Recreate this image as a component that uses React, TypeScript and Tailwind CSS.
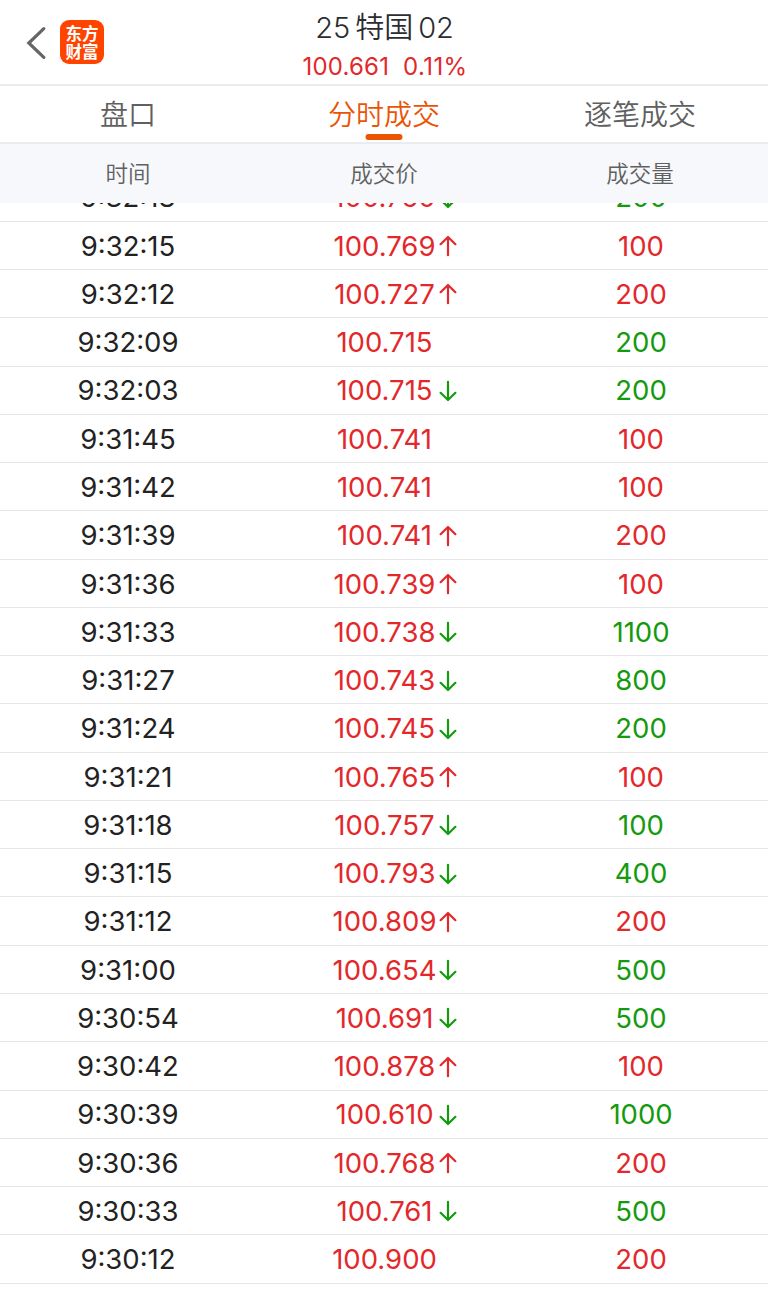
import clsx from 'clsx'

type Trend = 'up' | 'down' | 'flat'

interface Deal {
  time: string
  price: string
  trend: Trend
  volume: number
  side: 'buy' | 'sell'
}

const deals: Deal[] = [
  { time: '9:32:18', price: '100.760', trend: 'down', volume: 200, side: 'sell' },
  { time: '9:32:15', price: '100.769', trend: 'up', volume: 100, side: 'buy' },
  { time: '9:32:12', price: '100.727', trend: 'up', volume: 200, side: 'buy' },
  { time: '9:32:09', price: '100.715', trend: 'flat', volume: 200, side: 'sell' },
  { time: '9:32:03', price: '100.715', trend: 'down', volume: 200, side: 'sell' },
  { time: '9:31:45', price: '100.741', trend: 'flat', volume: 100, side: 'buy' },
  { time: '9:31:42', price: '100.741', trend: 'flat', volume: 100, side: 'buy' },
  { time: '9:31:39', price: '100.741', trend: 'up', volume: 200, side: 'buy' },
  { time: '9:31:36', price: '100.739', trend: 'up', volume: 100, side: 'buy' },
  { time: '9:31:33', price: '100.738', trend: 'down', volume: 1100, side: 'sell' },
  { time: '9:31:27', price: '100.743', trend: 'down', volume: 800, side: 'sell' },
  { time: '9:31:24', price: '100.745', trend: 'down', volume: 200, side: 'sell' },
  { time: '9:31:21', price: '100.765', trend: 'up', volume: 100, side: 'buy' },
  { time: '9:31:18', price: '100.757', trend: 'down', volume: 100, side: 'sell' },
  { time: '9:31:15', price: '100.793', trend: 'down', volume: 400, side: 'sell' },
  { time: '9:31:12', price: '100.809', trend: 'up', volume: 200, side: 'buy' },
  { time: '9:31:00', price: '100.654', trend: 'down', volume: 500, side: 'sell' },
  { time: '9:30:54', price: '100.691', trend: 'down', volume: 500, side: 'sell' },
  { time: '9:30:42', price: '100.878', trend: 'up', volume: 100, side: 'buy' },
  { time: '9:30:39', price: '100.610', trend: 'down', volume: 1000, side: 'sell' },
  { time: '9:30:36', price: '100.768', trend: 'up', volume: 200, side: 'buy' },
  { time: '9:30:33', price: '100.761', trend: 'down', volume: 500, side: 'sell' },
  { time: '9:30:12', price: '100.900', trend: 'flat', volume: 200, side: 'buy' },
]

const tabs = ['盘口', '分时成交', '逐笔成交']
const columns = ['时间', '成交价', '成交量']

const TrendArrow = ({ trend }: { trend: Trend }) => {
  if (trend === 'flat') return null

  return (
    <svg
      viewBox="0 0 18 22"
      className={clsx(
        'absolute top-[13px] left-[182.5px] h-[22px] w-[18px]',
        trend === 'up' ? 'text-[#e3282b]' : 'rotate-180 text-[#149a0d]',
      )}
      fill="none"
      stroke="currentColor"
      strokeWidth="2.2"
      strokeLinecap="round"
      strokeLinejoin="round"
    >
      <path d="M9 20.2V2.2M1.6 9.2 9 2l7.4 7.2" />
    </svg>
  )
}

const Header = () => (
  <header className="grid h-[86px] shrink-0 grid-cols-3 border-b-2 border-[#ededee]">
    <div className="flex items-start pt-5 pl-[26px]">
      <svg
        viewBox="0 0 20 34"
        className="mt-[6px] h-[34px] w-5"
        fill="none"
        stroke="#666"
        strokeWidth="3.2"
        strokeLinecap="round"
      >
        <path d="M17.8 2.6 2.8 17l15 14.4" />
      </svg>
      <div className="ml-[14px] flex size-[44px] flex-col items-center justify-center rounded-[9px] bg-[#ff4400] pt-px text-[16.5px] leading-[18px] font-bold text-white">
        <span>东方</span>
        <span>财富</span>
      </div>
    </div>
    <div className="flex flex-col items-center whitespace-nowrap">
      <h1 className="mt-[10px] flex h-9 items-center gap-[5px] pl-px text-[29px] leading-9 font-[350] text-[#2b2d30]">
        <span>25</span>
        <span>特国</span>
        <span>02</span>
      </h1>
      <p className="mt-[6px] flex gap-[14px] pl-[2px] text-[24px] leading-[30px] tracking-[0.2px] text-[#e3282b]">
        <span>100.661</span>
        <span className="tracking-[0.4px]">0.11%</span>
      </p>
    </div>
  </header>
)

const Tabs = () => (
  <nav className="grid h-[58px] shrink-0 grid-cols-3 border-b-2 border-[#ebebec]">
    {tabs.map((tab, index) => (
      <button
        key={tab}
        className={clsx(
          'relative flex h-[57px] items-center justify-center text-[28px] leading-none font-[350]',
          index === 1 ? 'text-[#ea5504]' : 'text-[#606060]',
        )}
      >
        {tab}
        {index === 1 && (
          <span className="absolute bottom-[3px] left-1/2 h-[6px] w-[37px] -translate-x-1/2 rounded-full bg-[#ea5504]" />
        )}
      </button>
    ))}
  </nav>
)

const DealRow = ({ deal }: { deal: Deal }) => (
  <li className="grid h-[48.28px] shrink-0 grid-cols-3 items-center border-b-[1.5px] border-[#e6e6e7] pt-[2px] text-center text-[27.5px] leading-none">
    <span className="text-[#222]">{deal.time}</span>
    <span className="relative -mt-[2px] flex h-[46.5px] items-center justify-center pt-[2px] pl-px text-[#e3282b]">
      {deal.price}
      <TrendArrow trend={deal.trend} />
    </span>
    <span className={clsx('pl-[2px]', deal.side === 'buy' ? 'text-[#e3282b]' : 'text-[#149a0d]')}>
      {deal.volume}
    </span>
  </li>
)

export default function App() {
  return (
    <main className="flex h-[1294px] w-[768px] flex-col overflow-hidden bg-white font-['Inter','Noto_Sans_CJK_SC',sans-serif]">
      <Header />
      <Tabs />
      <div className="grid h-[59px] shrink-0 grid-cols-3 items-center bg-[#f6f8fb] pt-px text-center text-[22.5px] leading-none font-[350] text-[#606060]">
        {columns.map((column) => (
          <span key={column}>{column}</span>
        ))}
      </div>
      <div className="min-h-0 flex-1 overflow-hidden">
        {/* list is scrolled, the newest deal is half under the column titles */}
        <ul className="-mt-[29.5px] flex flex-col">
          {deals.map((deal) => (
            <DealRow key={deal.time} deal={deal} />
          ))}
        </ul>
      </div>
    </main>
  )
}
